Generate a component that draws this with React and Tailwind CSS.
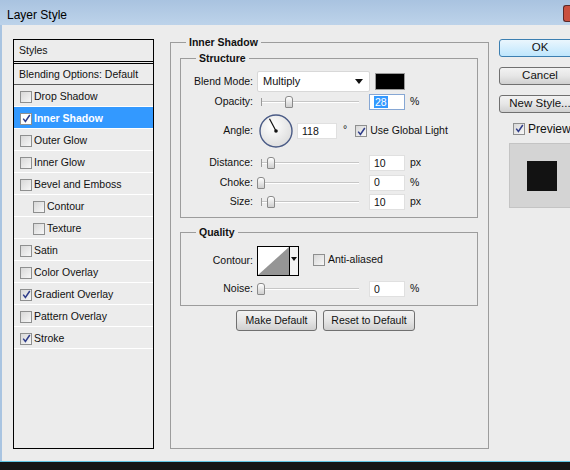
import React from 'react';

const styles = [
  { t: 'Drop Shadow' },
  { t: 'Inner Shadow', c: true, sel: true },
  { t: 'Outer Glow' },
  { t: 'Inner Glow' },
  { t: 'Bevel and Emboss' },
  { t: 'Contour', ind: true },
  { t: 'Texture', ind: true },
  { t: 'Satin' },
  { t: 'Color Overlay' },
  { t: 'Gradient Overlay', c: true },
  { t: 'Pattern Overlay' },
  { t: 'Stroke', c: true },
];

function Check({ checked, white }) {
  return (
    <span
      className={`inline-flex w-[12px] h-[12px] shrink-0 items-center justify-center border border-[#8e8f8f] ${
        white ? 'bg-white' : 'bg-gradient-to-br from-[#d8d8d8] to-[#f7f7f7]'
      }`}
    >
      {checked && (
        <svg width="9" height="9" viewBox="0 0 9 9">
          <path d="M1.2 4.6 L3.4 7.4 L7.8 1" stroke="#2f3d8a" strokeWidth="1.5" fill="none" />
        </svg>
      )}
    </span>
  );
}

function Slider({ pos }) {
  return (
    <div className="relative w-[98px] h-[14px] shrink-0">
      <div className="absolute left-0 right-0 top-[6px] h-[2px] bg-[#c6c6c6] border-b border-white" />
      <div className="absolute left-0 top-[3px] w-px h-[8px] bg-[#9a9a9a]" />
      <div
        className="absolute top-[1px] w-[8px] h-[12px] rounded-t-[3px] rounded-b-[1px] border border-[#8a8a8a] bg-gradient-to-b from-white to-[#cfcfcf]"
        style={{ left: pos - 4 }}
      />
    </div>
  );
}

function Field({ value, w = 36, selected }) {
  return (
    <div
      className={`shrink-0 h-[16px] bg-white border pl-[4px] flex items-center leading-none ${
        selected ? 'border-[#86a7d4]' : 'border-[#e0e0e0]'
      }`}
      style={{ width: w }}
    >
      {selected ? <span className="bg-[#3399ff] text-white px-px py-[1px]">{value}</span> : value}
    </div>
  );
}

function Label({ children }) {
  return <div className="w-[72px] shrink-0 text-right">{children}</div>;
}

function SliderRow({ label, pos, value, unit, h }) {
  return (
    <div className={`flex items-center ${h}`}>
      <Label>{label}</Label>
      <div className="ml-[8px]">
        <Slider pos={pos} />
      </div>
      <div className="ml-[10px]">
        <Field value={value} />
      </div>
      <span className="ml-[5px]">{unit}</span>
    </div>
  );
}

function Group({ title, className, children }) {
  return (
    <div className={`relative border border-[#9c9c9c] ${className}`}>
      <span className="absolute -top-[7px] left-[15px] px-[3px] h-[13px] leading-[13px] bg-[#ececec] font-bold">
        {title}
      </span>
      {children}
    </div>
  );
}

function Dial() {
  return (
    <svg width="34" height="34" viewBox="0 0 34 34" className="shrink-0">
      <defs>
        <radialGradient id="dialg" cx="40%" cy="35%" r="70%">
          <stop offset="0%" stopColor="#ffffff" />
          <stop offset="100%" stopColor="#dcdcdc" />
        </radialGradient>
      </defs>
      <circle cx="17" cy="17" r="16" fill="url(#dialg)" stroke="#4a5b86" strokeWidth="1.4" />
      <line x1="17" y1="17" x2="10.5" y2="4.8" stroke="#111" strokeWidth="1.2" />
      <circle cx="17" cy="17" r="1.8" fill="#111" />
    </svg>
  );
}

function WinButton({ children, primary }) {
  return (
    <div
      className={`w-[82px] h-[18px] flex items-center justify-center rounded-[3px] border ${
        primary
          ? 'border-[#3c7fb1] bg-gradient-to-b from-[#eaf6fd] to-[#bee6fd]'
          : 'border-[#707070] bg-gradient-to-b from-[#f2f2f2] via-[#e6e6e6] to-[#d0d0d0]'
      }`}
    >
      {children}
    </div>
  );
}

export default function App() {
  return (
    <div className="w-[570px] h-[470px] overflow-hidden flex flex-col font-['Liberation_Sans',Arial,sans-serif] text-[10.5px] text-[#111]">
      {/* title bar */}
      <div className="w-[570px] h-[25px] shrink-0 flex justify-between items-start bg-gradient-to-b from-[#a9c3e0] to-[#bdd3ea]">
        <span className="pl-[7px] pt-[6px] text-[12px] text-black">Layer Style</span>
        <div className="mt-[5px] w-[7px] h-[17px] shrink-0 rounded-l-[3px] border-y border-l border-[#5b2a2a] bg-[#c9503f]" />
      </div>

      {/* body */}
      <div className="h-[436px] shrink-0 flex items-start bg-[#ececec] border-l-2 border-[#a9c4e1]">
        {/* styles list */}
        <div className="ml-[11px] mt-[14px] w-[141px] h-[410px] shrink-0 border border-black">
          <div className="h-[22px] flex items-center pl-[5px] border-b border-black">Styles</div>
          <div className="mt-px border-t border-black h-[22px] flex items-center pl-[5px] pt-[2px] border-b border-b-[#5a5a5a]">
            Blending Options: Default
          </div>
          {styles.map((s) => (
            <div
              key={s.t}
              className={`h-[22px] flex items-center pt-[2px] border-b border-white ${s.ind ? 'pl-[19px]' : 'pl-[6px]'} ${
                s.sel ? 'bg-[#3399ff] text-white font-bold' : ''
              }`}
            >
              <Check checked={s.c} white={s.sel} />
              <span className="ml-[2px]">{s.t}</span>
            </div>
          ))}
        </div>

        {/* main group */}
        <Group title="Inner Shadow" className="ml-[16px] mt-[17px] w-[319px] h-[407px] shrink-0 pt-[15px] pl-[9px]">
          <Group title="Structure" className="w-[298px] h-[160px] pt-[12px]">
            <div className="flex items-center h-[21px]">
              <Label>Blend Mode:</Label>
              <div className="ml-[4px] w-[113px] h-[21px] bg-white border border-[#d8d8d8] rounded-[2px] flex items-center justify-between pl-[5px] pr-[6px]">
                <span className="text-[11px]">Multiply</span>
                <svg width="8" height="5" viewBox="0 0 8 5">
                  <path d="M0 0 H8 L4 5 Z" fill="#111" />
                </svg>
              </div>
              <div className="ml-[5px] w-[30px] h-[17px] bg-black border border-[#9a9a9a]" />
            </div>
            <div className="flex items-center h-[20px]">
              <Label>Opacity:</Label>
              <div className="ml-[8px]">
                <Slider pos={28} />
              </div>
              <div className="ml-[10px]">
                <Field value="28" selected />
              </div>
              <span className="ml-[5px]">%</span>
            </div>
            <div className="flex items-center h-[38px]">
              <Label>Angle:</Label>
              <div className="ml-[6px]">
                <Dial />
              </div>
              <div className="ml-[4px]">
                <Field value="118" w={40} />
              </div>
              <span className="ml-[6px] self-start mt-[10px]">°</span>
              <div className="ml-[8px] flex items-center">
                <Check checked />
                <span className="ml-[3px]">Use Global Light</span>
              </div>
            </div>
            <div className="mt-[3px]">
              <SliderRow label="Distance:" pos={10} value="10" unit="px" h="h-[20px]" />
              <SliderRow label="Choke:" pos={0} value="0" unit="%" h="h-[19px]" />
              <SliderRow label="Size:" pos={10} value="10" unit="px" h="h-[20px]" />
            </div>
          </Group>

          <Group title="Quality" className="mt-[14px] w-[298px] h-[74px] pt-[13px]">
            <div className="flex items-center h-[30px]">
              <Label>Contour:</Label>
              <div className="ml-[4px] w-[42px] h-[30px] border border-black flex bg-white">
                <svg width="31" height="28" viewBox="0 0 31 28" className="shrink-0">
                  <polygon points="0,28 31,0 31,28" fill="#959595" />
                </svg>
                <div className="flex-1 border-l border-black bg-[#f3f3f3] flex justify-center pt-[10px]">
                  <svg width="6" height="4" viewBox="0 0 6 4">
                    <path d="M0 0 H6 L3 4 Z" fill="#111" />
                  </svg>
                </div>
              </div>
              <div className="ml-[14px] flex items-center -mt-[2px]">
                <Check />
                <span className="ml-[3px]">Anti-aliased</span>
              </div>
            </div>
            <div className="mt-[5px]">
              <SliderRow label="Noise:" pos={0} value="0" unit="%" h="h-[16px]" />
            </div>
          </Group>

          <div className="mt-[4px] ml-[56px] flex gap-[6px]">
            <div className="w-[81px] h-[21px] flex items-center justify-center rounded-[3px] border border-[#707070] bg-gradient-to-b from-[#f2f2f2] via-[#e6e6e6] to-[#d0d0d0]">
              Make Default
            </div>
            <div className="w-[92px] h-[21px] flex items-center justify-center rounded-[3px] border border-[#707070] bg-gradient-to-b from-[#f2f2f2] via-[#e6e6e6] to-[#d0d0d0]">
              Reset to Default
            </div>
          </div>
        </Group>

        {/* right column */}
        <div className="ml-[10px] mt-[14px] w-[82px] shrink-0 flex flex-col text-[11.5px]">
          <WinButton primary>OK</WinButton>
          <div className="mt-[10px]">
            <WinButton>Cancel</WinButton>
          </div>
          <div className="mt-[10px]">
            <WinButton>New Style...</WinButton>
          </div>
          <div className="mt-[9px] ml-[14px] h-[13px] flex items-center">
            <Check checked />
            <span className="ml-[3px] text-[12px]">Preview</span>
          </div>
          <div className="mt-[8px] ml-[10px] w-[66px] h-[65px] bg-[#d4d4d4] border border-[#c4c4c4] flex items-center justify-center">
            <div className="w-[30px] h-[30px] bg-[#121212]" />
          </div>
        </div>
      </div>

      <div className="h-px shrink-0 bg-[#63c6e4]" />
      <div className="flex-1 bg-[#161616]" />
    </div>
  );
}
